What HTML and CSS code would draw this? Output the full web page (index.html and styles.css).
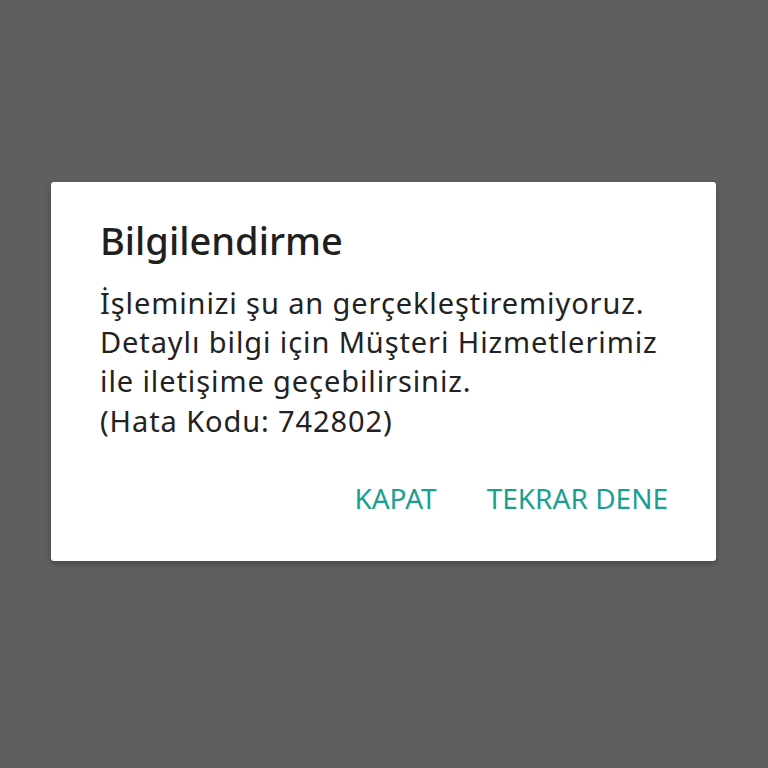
FILE: index.html
```html
<!DOCTYPE html>
<html lang="tr">
<head>
<meta charset="utf-8">
<link rel="stylesheet" href="styles.css">
</head>
<body>
<div class="screen">
  <div class="dialog">
    <h1 class="title">Bilgilendirme</h1>
    <p class="message">İşleminizi şu an gerçekleştiremiyoruz.<br>Detaylı bilgi için Müşteri Hizmetlerimiz<br>ile iletişime geçebilirsiniz.<br>(Hata Kodu: 742802)</p>
    <div class="actions">
      <span class="btn">KAPAT</span>
      <span class="btn">TEKRAR DENE</span>
    </div>
  </div>
</div>
</body>
</html>
```
FILE: styles.css
```css
html, body {
  margin: 0;
  padding: 0;
}
body {
  background: #5f5f5f;
  font-family: "Noto Sans", "Open Sans", sans-serif;
}
.screen {
  width: 768px;
  height: 768px;
  padding-top: 182px;
  padding-left: 51px;
  box-sizing: border-box;
}
.dialog {
  width: 665px;
  height: 379px;
  box-sizing: border-box;
  background: #ffffff;
  border-radius: 3px;
  box-shadow: 0 3px 6px rgba(0,0,0,0.25);
  padding: 35px 48px 0 49px;
}
.title {
  margin: 0;
  font-size: 38px;
  font-weight: 500;
  color: #1f1f1f;
  line-height: 46px;
}
.message {
  margin: 20px 0 0 0;
  font-size: 29px;
  letter-spacing: 0.9px;
  line-height: 39.2px;
  color: #222222;
}
.actions {
  display: flex;
  justify-content: flex-end;
  gap: 50px;
  margin-top: 41px;
}
.btn {
  font-size: 28px;
  line-height: 34px;
  color: #1aa08f;
}
```
